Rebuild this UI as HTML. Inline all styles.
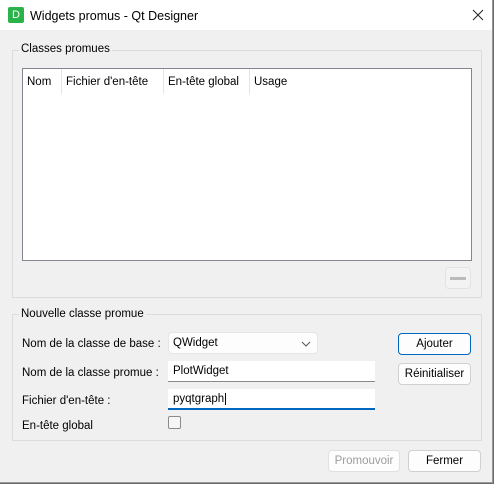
<!DOCTYPE html>
<html><head><style>
*{box-sizing:border-box;margin:0;padding:0}
body{width:494px;height:484px;background:#6a6a6a;font-family:"Liberation Sans",sans-serif;font-size:11.5px;color:#000;position:relative;overflow:hidden}
.win{position:absolute;left:0;top:0;width:493px;height:483px;background:#f0f0f0;border-right:1px solid #999;border-bottom:1px solid #999}
.title{position:absolute;left:0;top:0;width:100%;height:30px;background:#fff}
.a{position:absolute;white-space:nowrap}
.grp{position:absolute;border:1px solid #dcdcdc}
.gt{position:absolute;background:#f0f0f0;padding:0 2px}
.btn{position:absolute;background:#fdfdfd;border:1px solid #d0d0d0;border-radius:4px;text-align:center;line-height:21px}
.edit{position:absolute;background:#fff;border-bottom:1px solid #8a8a8a;padding-left:5px;line-height:21px}
</style></head><body>
<div class="win">
<div class="title">
<div class="a" style="left:8px;top:7px;width:16px;height:16px;background:#2ab34a;border-radius:2px;color:#fff;font-size:11px;text-align:center;line-height:16px">D</div>
<div class="a" style="left:30px;top:9px;font-size:12.5px">Widgets promus - Qt Designer</div>
<svg class="a" style="left:472px;top:9px" width="12" height="12"><path d="M1 1L11 11M11 1L1 11" stroke="#222" stroke-width="1"/></svg>
</div>
<div class="grp" style="left:12px;top:50px;width:470px;height:248px"></div>
<div class="gt" style="left:19px;top:43px">Classes promues</div>
<div class="a" style="left:22px;top:68px;width:450px;height:193px;background:#fff;border:1px solid #828790"></div>
<div class="a" style="left:27px;top:76px">Nom</div>
<div class="a" style="left:61px;top:69px;width:1px;height:25px;background:#e5e5e5"></div>
<div class="a" style="left:66px;top:76px">Fichier d'en-tête</div>
<div class="a" style="left:163px;top:69px;width:1px;height:25px;background:#e5e5e5"></div>
<div class="a" style="left:168px;top:76px">En-tête global</div>
<div class="a" style="left:249px;top:69px;width:1px;height:25px;background:#e5e5e5"></div>
<div class="a" style="left:254px;top:76px">Usage</div>
<div class="btn" style="left:445px;top:267px;width:26px;height:22px;border-color:#e3e3e3;background:#f3f3f3"></div>
<div class="a" style="left:450px;top:277px;width:16px;height:3px;background:#bbb"></div>
<div class="grp" style="left:12px;top:314px;width:470px;height:127px"></div>
<div class="gt" style="left:19px;top:308px">Nouvelle classe promue</div>
<div class="a" style="left:22px;top:338px">Nom de la classe de base :</div>
<div class="a" style="left:22px;top:367px">Nom de la classe promue :</div>
<div class="a" style="left:22px;top:395px">Fichier d'en-tête :</div>
<div class="a" style="left:22px;top:420px">En-tête global</div>
<div class="btn" style="left:168px;top:332px;width:150px;height:22px;text-align:left;padding-left:4px;border-color:#e5e5e5">QWidget<svg style="position:absolute;right:6px;top:8px" width="10" height="6"><path d="M1 1L5 5L9 1" fill="none" stroke="#555"/></svg></div>
<div class="edit" style="left:168px;top:361px;width:207px;height:21px">PlotWidget</div>
<div class="edit" style="left:168px;top:389px;width:207px;height:21px;border-bottom:2px solid #0067c0">pyqtgraph<span style="border-left:1px solid #000;margin-left:1px"></span></div>
<div class="a" style="left:168px;top:416px;width:13px;height:13px;border:1px solid #8a8a8a;border-radius:2px;background:#f6f6f6"></div>
<div class="btn" style="left:398px;top:333px;width:73px;height:22px;border-color:#0067c0">Ajouter</div>
<div class="btn" style="left:398px;top:363px;width:73px;height:22px">Réinitialiser</div>
<div class="btn" style="left:328px;top:450px;width:72px;height:22px;color:#9d9d9d;border-color:#e0e0e0">Promouvoir</div>
<div class="btn" style="left:408px;top:450px;width:73px;height:22px">Fermer</div>
</div>
</body></html>
